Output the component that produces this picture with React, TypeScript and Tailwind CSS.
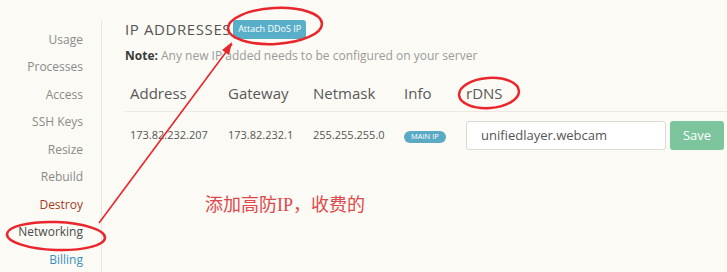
import React from 'react';

const navItems = [
  { label: 'Usage', cls: 'text-[#8a8a8a]' },
  { label: 'Processes', cls: 'text-[#8a8a8a]' },
  { label: 'Access', cls: 'text-[#8a8a8a]' },
  { label: 'SSH Keys', cls: 'text-[#8a8a8a]' },
  { label: 'Resize', cls: 'text-[#8a8a8a]' },
  { label: 'Rebuild', cls: 'text-[#8a8a8a]' },
  { label: 'Destroy', cls: 'text-[#a23a1e]' },
  { label: 'Networking', cls: 'text-[#4a4a4a]' },
  { label: 'Billing', cls: 'text-[#3a8fbd]' },
];

function Annotations() {
  return (
    <svg
      className="absolute inset-0 pointer-events-none"
      width="727"
      height="272"
      viewBox="0 0 727 272"
    >
      <g fill="none" stroke="#e8262b" strokeWidth="2.5">
        <ellipse cx="275" cy="26" rx="47" ry="18" transform="rotate(-3 275 26)" />
        <ellipse cx="489" cy="93" rx="30" ry="15" transform="rotate(-4 489 93)" />
        <ellipse cx="56" cy="236" rx="49" ry="14" transform="rotate(2 56 236)" />
      </g>
      <line x1="99" y1="223" x2="232" y2="44" stroke="#e8262b" strokeWidth="1.6" />
      <path d="M232 42 L222 50 L229 55 Z" fill="#e8262b" />
    </svg>
  );
}

export default function App() {
  return (
    <div
      className="relative w-[727px] h-[272px] overflow-hidden bg-[#fcfaf5] flex"
      style={{ fontFamily: '"Open Sans", "Noto Sans", sans-serif' }}
    >
      <aside className="w-[102px] shrink-0 mt-[20px] border-r border-[#e9e6de] pt-[6px] pr-[18px] flex flex-col items-end">
        {navItems.map((n) => (
          <div key={n.label} className={`h-[27.5px] shrink-0 flex items-center text-[12px] ${n.cls}`}>
            {n.label}
          </div>
        ))}
      </aside>

      <main className="flex-1 pl-[23px] pt-[19px]">
        <div className="flex items-center h-[20px]">
          <h2 className="text-[15px] tracking-[0.6px] text-[#555] leading-none">IP ADDRESSES</h2>
          <span className="ml-[2px] h-[19px] px-[5px] rounded-[3px] bg-[#5aafc8] text-white text-[9px] flex items-center">
            Attach DDoS IP
          </span>
        </div>
        <p className="mt-[9px] text-[12px] text-[#9a9a9a] leading-[16px]">
          <span className="font-bold text-[#3a3a3a]">Note:</span> Any new IP added needs to be configured on your server
        </p>

        <div className="mt-[11px] border-b border-[#ece9e1] h-[37px] flex items-center text-[15px] text-[#585858]">
          <div className="w-[98px] pl-[5px]">Address</div>
          <div className="w-[85px] pl-[5px]">Gateway</div>
          <div className="w-[91px] pl-[5px]">Netmask</div>
          <div className="w-[62px] pl-[5px]">Info</div>
          <div className="pl-[5px]">rDNS</div>
        </div>

        <div className="flex items-center h-[47px] text-[11px] text-[#555]">
          <div className="w-[98px] pl-[5px]">173.82.232.207</div>
          <div className="w-[85px] pl-[5px]">173.82.232.1</div>
          <div className="w-[91px] pl-[5px]">255.255.255.0</div>
          <div className="w-[62px] pl-[5px]">
            <span className="inline-flex items-center h-[12px] px-[7px] rounded-full bg-[#5aaac4] text-white text-[7.5px]">
              MAIN IP
            </span>
          </div>
          <div className="pl-[5px] flex items-center">
            <div className="w-[200px] h-[29px] border border-[#dcd9d2] rounded-[3px] bg-white flex items-center px-[14px] text-[13px] text-[#555]">
              unifiedlayer.webcam
            </div>
            <div className="ml-[4px] w-[54px] h-[29px] rounded-[3px] bg-[#7bc49c] text-white text-[13px] flex items-center justify-center">
              Save
            </div>
          </div>
        </div>

        <div
          className="mt-[35px] ml-[80px] text-[18px] leading-[22px] text-[#e0474b]"
          style={{ fontFamily: '"Liberation Serif", "Noto Sans CJK SC", serif' }}
        >
          添加高防IP，收费的
        </div>
      </main>

      <Annotations />
    </div>
  );
}
